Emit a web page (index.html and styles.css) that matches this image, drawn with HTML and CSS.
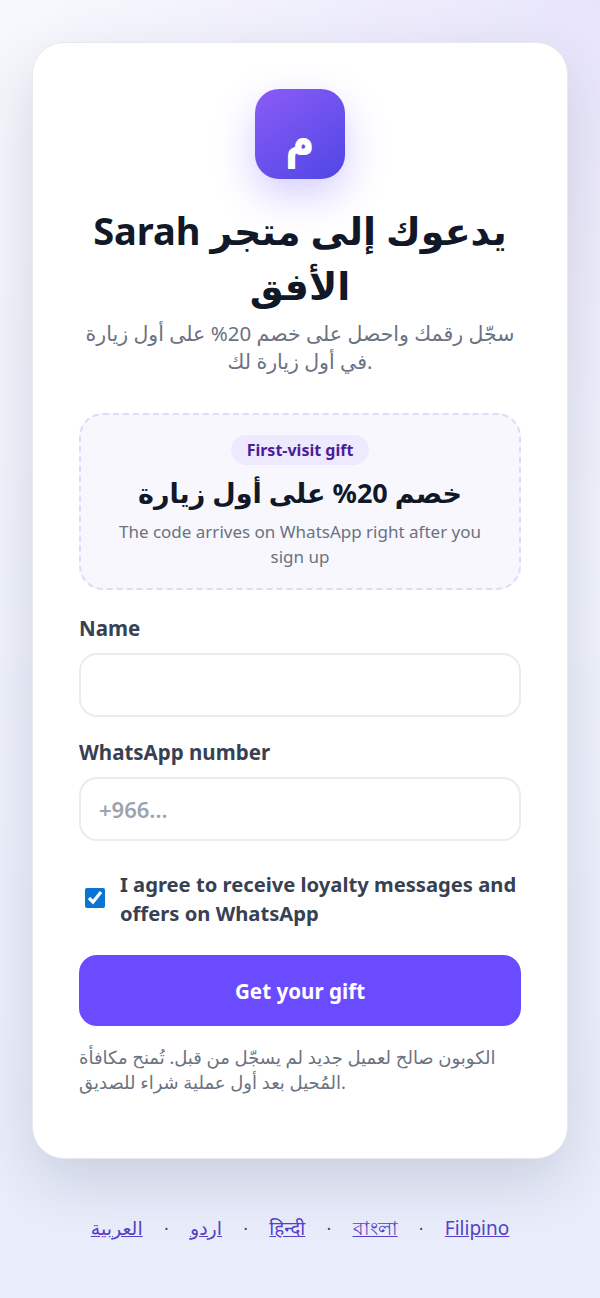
FILE: index.html
```html
<!DOCTYPE html>
<html lang="en">
<head>
<meta charset="UTF-8">
<meta name="viewport" content="width=device-width, initial-scale=1.0">
<title>Sarah</title>
<link rel="stylesheet" href="styles.css">
</head>
<body>

<main class="card">
    <div class="logo"><span class="logoLetter">م</span></div>
    <h1 class="title">Sarah يدعوك إلى متجر الأفق</h1>
    <p class="subtitle">سجّل رقمك واحصل على خصم 20% على أول زيارة في أول زيارة لك.</p>

    <div class="gift">
        <span class="giftBadge">First-visit gift</span>
        <div class="giftTitle">خصم 20% على أول زيارة</div>
        <p class="giftNote">The code arrives on WhatsApp right after you sign up</p>
    </div>

    <form class="form">
        <label class="fieldLabel" for="nameField">Name</label>
        <input class="field" type="text" id="nameField">

        <label class="fieldLabel" for="phoneField">WhatsApp number</label>
        <input class="field" type="tel" id="phoneField" placeholder="+966...">

        <label class="consent">
            <input class="consentBox" type="checkbox" checked>
            <span>I agree to receive loyalty messages and offers on WhatsApp</span>
        </label>

        <button class="submit" type="button">Get your gift</button>
    </form>

    <p class="terms">الكوبون صالح لعميل جديد لم يسجّل من قبل. تُمنح مكافأة المُحيل بعد أول عملية شراء للصديق.</p>
</main>

<nav class="langs">
    <a href="#">العربية</a>
    <span class="dot">·</span>
    <a href="#">اردو</a>
    <span class="dot">·</span>
    <a href="#">हिन्दी</a>
    <span class="dot">·</span>
    <a href="#">বাংলা</a>
    <span class="dot">·</span>
    <a href="#">Filipino</a>
</nav>

</body>
</html>
```

FILE: styles.css
```css
* {
    box-sizing: border-box;
}

body {
    font-family: 'Noto Sans', 'DejaVu Sans', sans-serif;
    margin: 0;
    min-height: 1298px;
    padding: 42px 32px 0;
    background:
        radial-gradient(circle at 100% 0, #e8e5fb 0, rgba(232, 229, 251, 0) 560px),
        linear-gradient(180deg, #f7f8fd 0%, #e9edfb 100%);
    color: #111827;
}

.card {
    background-color: #fff;
    border: 1px solid #e8e9f0;
    border-radius: 32px;
    padding: 46px 46px 48px;
    box-shadow: 0 24px 60px rgba(31, 41, 80, 0.16);
    text-align: center;
    height: 1117px;
}

.logo {
    width: 90px;
    height: 90px;
    margin: 0 auto 24px;
    border-radius: 24px;
    background: linear-gradient(145deg, #8b5cf6, #4f46e5);
    box-shadow: 0 16px 40px rgba(108, 75, 255, 0.28);
    color: #fff;
    font-size: 40px;
    font-weight: 700;
    line-height: 90px;
}

.logoLetter {
    display: inline-block;
    transform: translateY(4px) scaleY(1.25);
}

.title {
    font-size: 38px;
    font-weight: 700;
    line-height: 55px;
    margin: 0;
}

.subtitle {
    font-size: 20.5px;
    line-height: 28px;
    margin: 6px 0 38px;
    color: #6b7280;
}

.gift {
    background-color: #f8f7fd;
    border: 2px dashed #e0daf9;
    border-radius: 24px;
    padding: 20px 24px;
    height: 177px;
}

.giftBadge {
    display: inline-block;
    height: 30px;
    padding: 0 16px;
    border-radius: 15px;
    background-color: #ede9fe;
    color: #4c1d95;
    font-size: 16px;
    font-weight: 700;
    line-height: 30px;
}

.giftTitle {
    font-size: 27px;
    font-weight: 700;
    line-height: 44px;
    margin-top: 6px;
}

.giftNote {
    font-size: 17px;
    line-height: 25px;
    margin: 4px 0 0;
    color: #6b7280;
}

.form {
    display: flex;
    flex-direction: column;
    margin-top: 24px;
    text-align: left;
}

.fieldLabel {
    font-size: 20.5px;
    font-weight: 700;
    line-height: 28px;
    margin-bottom: 11px;
    color: #374151;
}

.field {
    height: 64px;
    margin-bottom: 21px;
    padding: 0 18px;
    border: 2px solid #ebecef;
    border-radius: 18px;
    background-color: #fff;
    font-family: inherit;
    font-size: 22px;
    font-weight: 600;
    color: #111827;
}

.field::placeholder {
    color: #9ca3af;
}

.consent {
    display: flex;
    align-items: center;
    gap: 15px;
    margin: 8px 0 27px;
    font-size: 20.2px;
    font-weight: 700;
    line-height: 29px;
    color: #374151;
}

.consentBox {
    width: 20px;
    height: 20px;
    margin: 0 0 2px 6px;
    flex-shrink: 0;
    accent-color: #0a74d4;
}

.submit {
    height: 71px;
    border: none;
    border-radius: 18px;
    background-color: #6a4bff;
    color: #fff;
    font-family: inherit;
    font-size: 20.6px;
    font-weight: 700;
}

.terms {
    margin: 19px 0 0;
    font-size: 18px;
    line-height: 25px;
    text-align: left;
    color: #6b7280;
}

.langs {
    display: flex;
    justify-content: center;
    align-items: baseline;
    gap: 21.5px;
    margin-top: 55px;
    font-size: 19px;
}

.langs a {
    color: #5640c8;
}

.dot {
    color: #374151;
    font-size: 16px;
}
```
